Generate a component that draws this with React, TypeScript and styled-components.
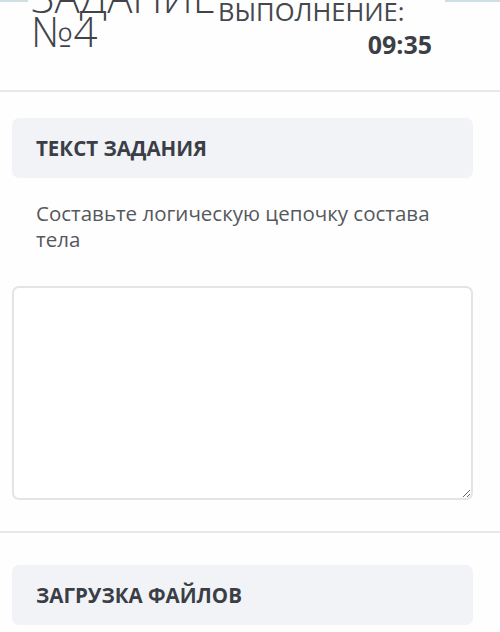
import React from 'react';
import styled, { createGlobalStyle } from 'styled-components';

const GlobalStyle = createGlobalStyle`
  html, body {
    margin: 0;
    padding: 0;
    background: #ffffff;
    font-family: 'Open Sans', 'Liberation Sans', sans-serif;
  }
  * {
    box-sizing: border-box;
  }
`;

const Page = styled.div`
  width: 500px;
  height: 632px;
  overflow: hidden;
  background: #fefefe;
`;

// strip of the sticky bar that sits just above the visible area
const TopEdge = styled.div`
  height: 2px;
  margin-bottom: -2px;
  position: relative;
  z-index: 1;
  background: linear-gradient(
    to right,
    #cddfe0 0,
    #cddfe0 28px,
    transparent 28px,
    transparent 445px,
    #cddfe0 445px
  );
`;

const Header = styled.div`
  display: flex;
  align-items: flex-start;
  height: 92px;
  border-bottom: 2px solid #e8e8e8;
`;

const Title = styled.h1`
  margin: -20px 0 0 31px;
  width: 187px;
  font-size: 42px;
  line-height: 34px;
  font-weight: 300;
  color: #404348;
  white-space: nowrap;
`;

const Timer = styled.div`
  display: flex;
  flex-direction: column;
  width: 214px;
`;

const TimerLabel = styled.div`
  margin-top: -3px;
  font-size: 25.5px;
  line-height: 28px;
  color: #45484d;
  white-space: nowrap;
`;

const TimerValue = styled.div`
  align-self: flex-end;
  margin-top: 4px;
  font-size: 25px;
  line-height: 30px;
  font-weight: 700;
  color: #3c3f45;
`;

const Section = styled.div<{ $top: number }>`
  padding: ${(p) => p.$top}px 27px 0 12px;
`;

const PanelHead = styled.div`
  height: 60px;
  display: flex;
  align-items: center;
  padding-left: 24px;
  border-radius: 7px;
  background: #f2f3f7;
  font-size: 20.5px;
  font-weight: 700;
  color: #3a3e46;
`;

const TaskText = styled.p`
  margin: 22px 0 0 24px;
  font-size: 20.5px;
  line-height: 26px;
  color: #55585d;
`;

const Answer = styled.textarea`
  display: block;
  width: 100%;
  height: 214px;
  margin-top: 34px;
  border: 2px solid #e4e4e4;
  border-radius: 7px;
  background: #ffffff;
  resize: vertical;
  font-family: inherit;
  font-size: 18px;
  outline: none;
`;

const Divider = styled.div`
  height: 2px;
  margin-top: 31px;
  background: #e8e8e8;
`;

export default function App() {
  return (
    <Page>
      <GlobalStyle />
      <TopEdge />
      <Header>
        <Title>
          ЗАДАНИЕ
          <br />
          №4
        </Title>
        <Timer>
          <TimerLabel>ВЫПОЛНЕНИЕ:</TimerLabel>
          <TimerValue>09:35</TimerValue>
        </Timer>
      </Header>
      <Section $top={26}>
        <PanelHead>ТЕКСТ ЗАДАНИЯ</PanelHead>
        <TaskText>
          Составьте логическую цепочку состава тела
        </TaskText>
        <Answer />
      </Section>
      <Divider />
      <Section $top={32}>
        <PanelHead>ЗАГРУЗКА ФАЙЛОВ</PanelHead>
      </Section>
    </Page>
  );
}
